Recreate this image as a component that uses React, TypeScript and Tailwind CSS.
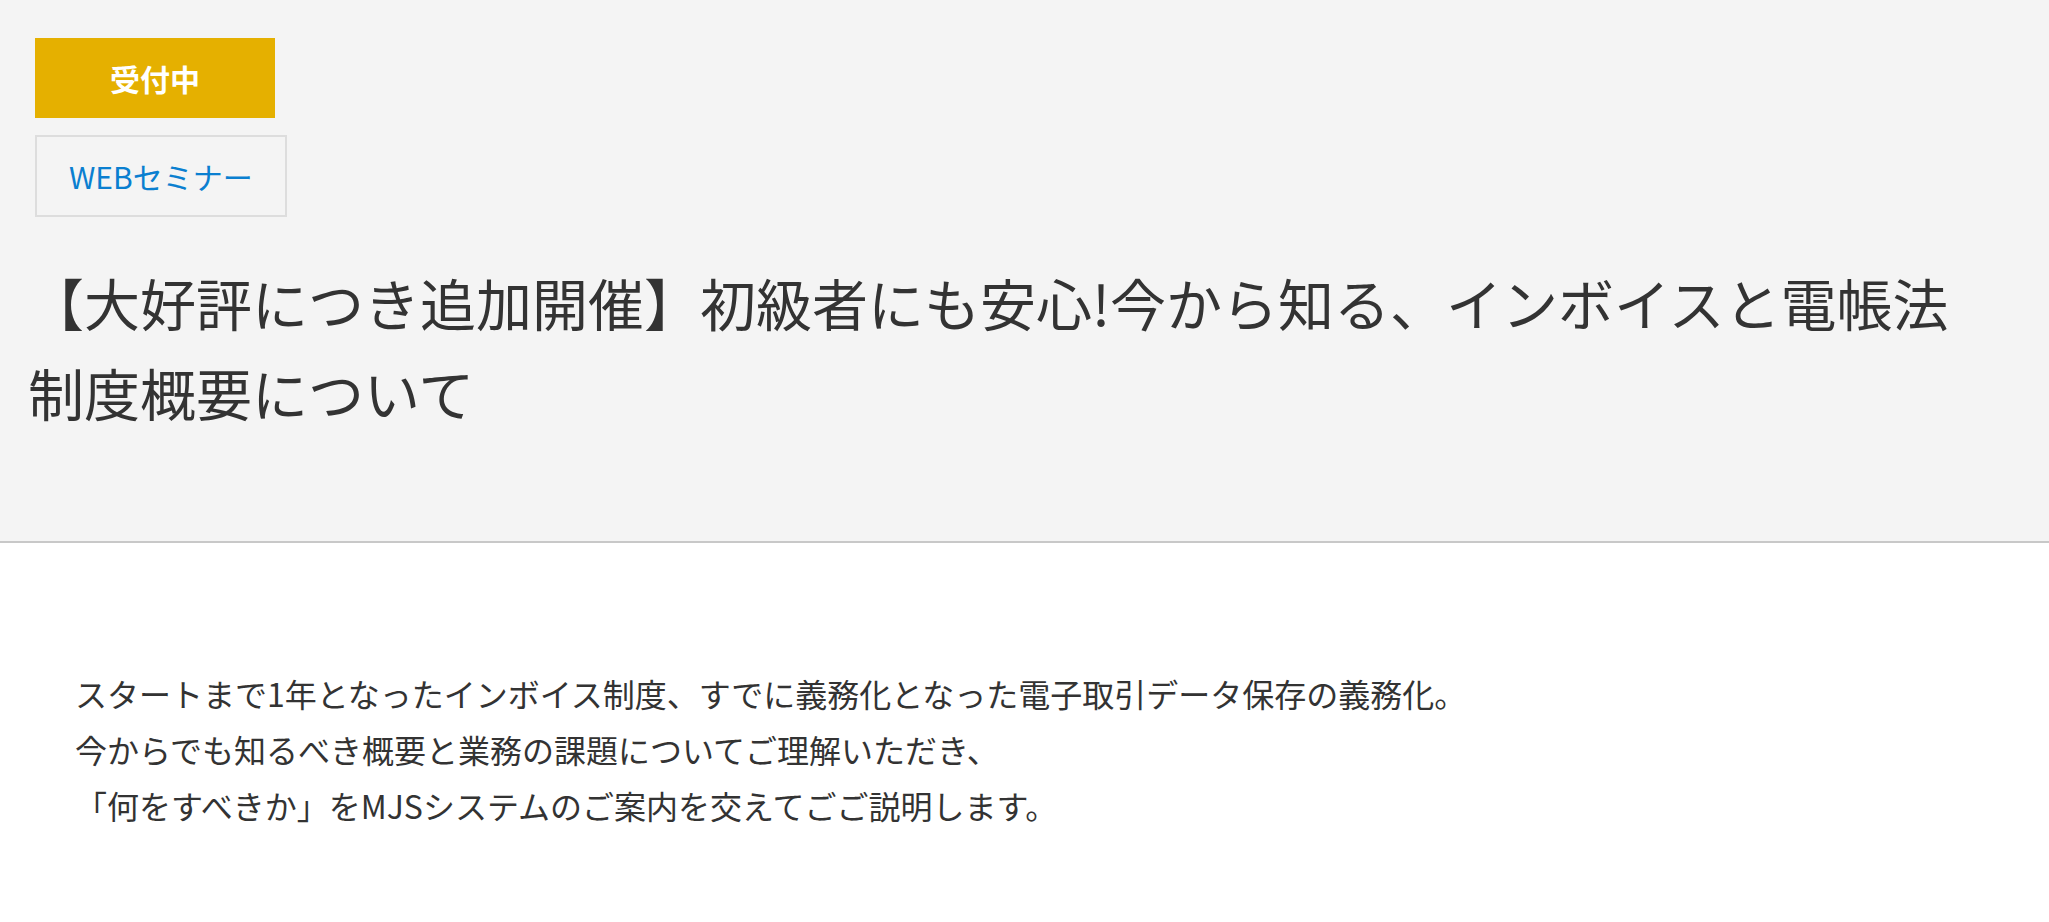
import React from "react";

export default function App() {
  return (
    <div className="min-h-screen bg-white font-['Noto_Sans_CJK_JP','Noto_Sans',sans-serif] text-[#333333]">
      <section className="bg-[#f4f4f4] border-b-2 border-[#c8c8c8] pl-[28px] pr-[60px] pt-[38px] pb-[104px]">
        <div className="ml-[7px] flex flex-col items-start gap-[17px]">
          <span className="flex h-[80px] w-[240px] items-center justify-center bg-[#e5b000] text-[30px] font-bold text-white">
            受付中
          </span>
          <span className="flex h-[82px] items-center border-2 border-[#dddddd] px-[32px] text-[30px] text-[#0a7fd0]">
            WEBセミナー
          </span>
        </div>
        <h1 className="mt-[40px] text-[56px] font-normal leading-[90px] text-[#333333]">
          【大好評につき追加開催】初級者にも安心!今から知る、インボイスと電帳法制度概要について
        </h1>
      </section>
      <section className="pl-[75px] pt-[122px] pb-[80px]">
        <p className="text-[32px] leading-[56px] text-[#333333]">
          スタートまで1年となったインボイス制度、すでに義務化となった電子取引データ保存の義務化。
          <br />
          今からでも知るべき概要と業務の課題についてご理解いただき、
          <br />
          「何をすべきか」をMJSシステムのご案内を交えてごご説明します。
        </p>
      </section>
    </div>
  );
}
